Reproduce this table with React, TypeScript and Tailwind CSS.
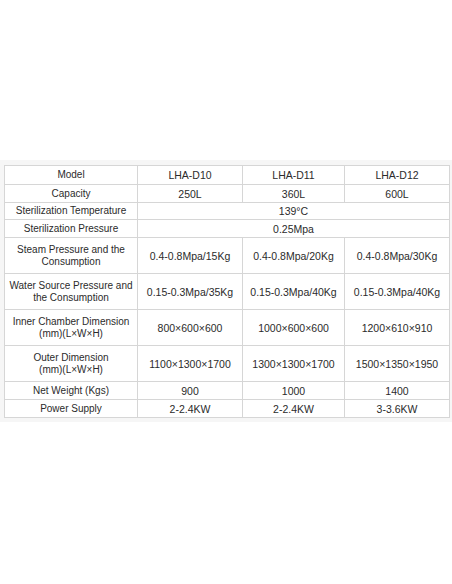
import React from "react";

type Row = { label: string[]; values: string[] | string; h: string };

const rows: Row[] = [
  { label: ["Model"], values: ["LHA-D10", "LHA-D11", "LHA-D12"], h: "h-[18px]" },
  { label: ["Capacity"], values: ["250L", "360L", "600L"], h: "h-[17px]" },
  { label: ["Sterilization Temperature"], values: "139°C", h: "h-[16px]" },
  { label: ["Sterilization Pressure"], values: "0.25Mpa", h: "h-[17px]" },
  {
    label: ["Steam Pressure and the", "Consumption"],
    values: ["0.4-0.8Mpa/15Kg", "0.4-0.8Mpa/20Kg", "0.4-0.8Mpa/30Kg"],
    h: "h-[35px]",
  },
  {
    label: ["Water Source Pressure and", "the Consumption"],
    values: ["0.15-0.3Mpa/35Kg", "0.15-0.3Mpa/40Kg", "0.15-0.3Mpa/40Kg"],
    h: "h-[35px]",
  },
  {
    label: ["Inner Chamber Dimension", "(mm)(L×W×H)"],
    values: ["800×600×600", "1000×600×600", "1200×610×910"],
    h: "h-[35px]",
  },
  {
    label: ["Outer Dimension", "(mm)(L×W×H)"],
    values: ["1100×1300×1700", "1300×1300×1700", "1500×1350×1950"],
    h: "h-[35px]",
  },
  { label: ["Net Weight (Kgs)"], values: ["900", "1000", "1400"], h: "h-[17px]" },
  { label: ["Power Supply"], values: ["2-2.4KW", "2-2.4KW", "3-3.6KW"], h: "h-[17px]" },
];

export default function App() {
  return (
    <div
      className="w-[452px] h-[584px] bg-white text-[#2b2b2b]"
      style={{ fontFamily: '"Liberation Sans", Arial, sans-serif' }}
    >
      <div className="h-[160px]" />
      <div className="bg-[#f6f6f6] pl-[4px] pr-[2px] pt-[5px] pb-[4px]">
        <div className="grid grid-cols-[132px_104px_101px_104px] gap-px p-px bg-[#d6d6d6]">
          {rows.map((r, i) => (
            <React.Fragment key={i}>
              <div
                className={`${r.h} bg-white flex flex-col items-center justify-center text-center text-[10px] leading-[12px]`}
              >
                {r.label.map((l, j) => (
                  <span key={j}>{l}</span>
                ))}
              </div>
              {typeof r.values === "string" ? (
                <div
                  className={`${r.h} col-span-3 bg-white flex items-center justify-center text-[10.5px] leading-[12px]`}
                >
                  {r.values}
                </div>
              ) : (
                r.values.map((v, j) => (
                  <div
                    key={j}
                    className={`${r.h} bg-white flex items-center justify-center text-[10.5px] leading-[12px] whitespace-nowrap`}
                  >
                    {v}
                  </div>
                ))
              )}
            </React.Fragment>
          ))}
        </div>
      </div>
    </div>
  );
}
